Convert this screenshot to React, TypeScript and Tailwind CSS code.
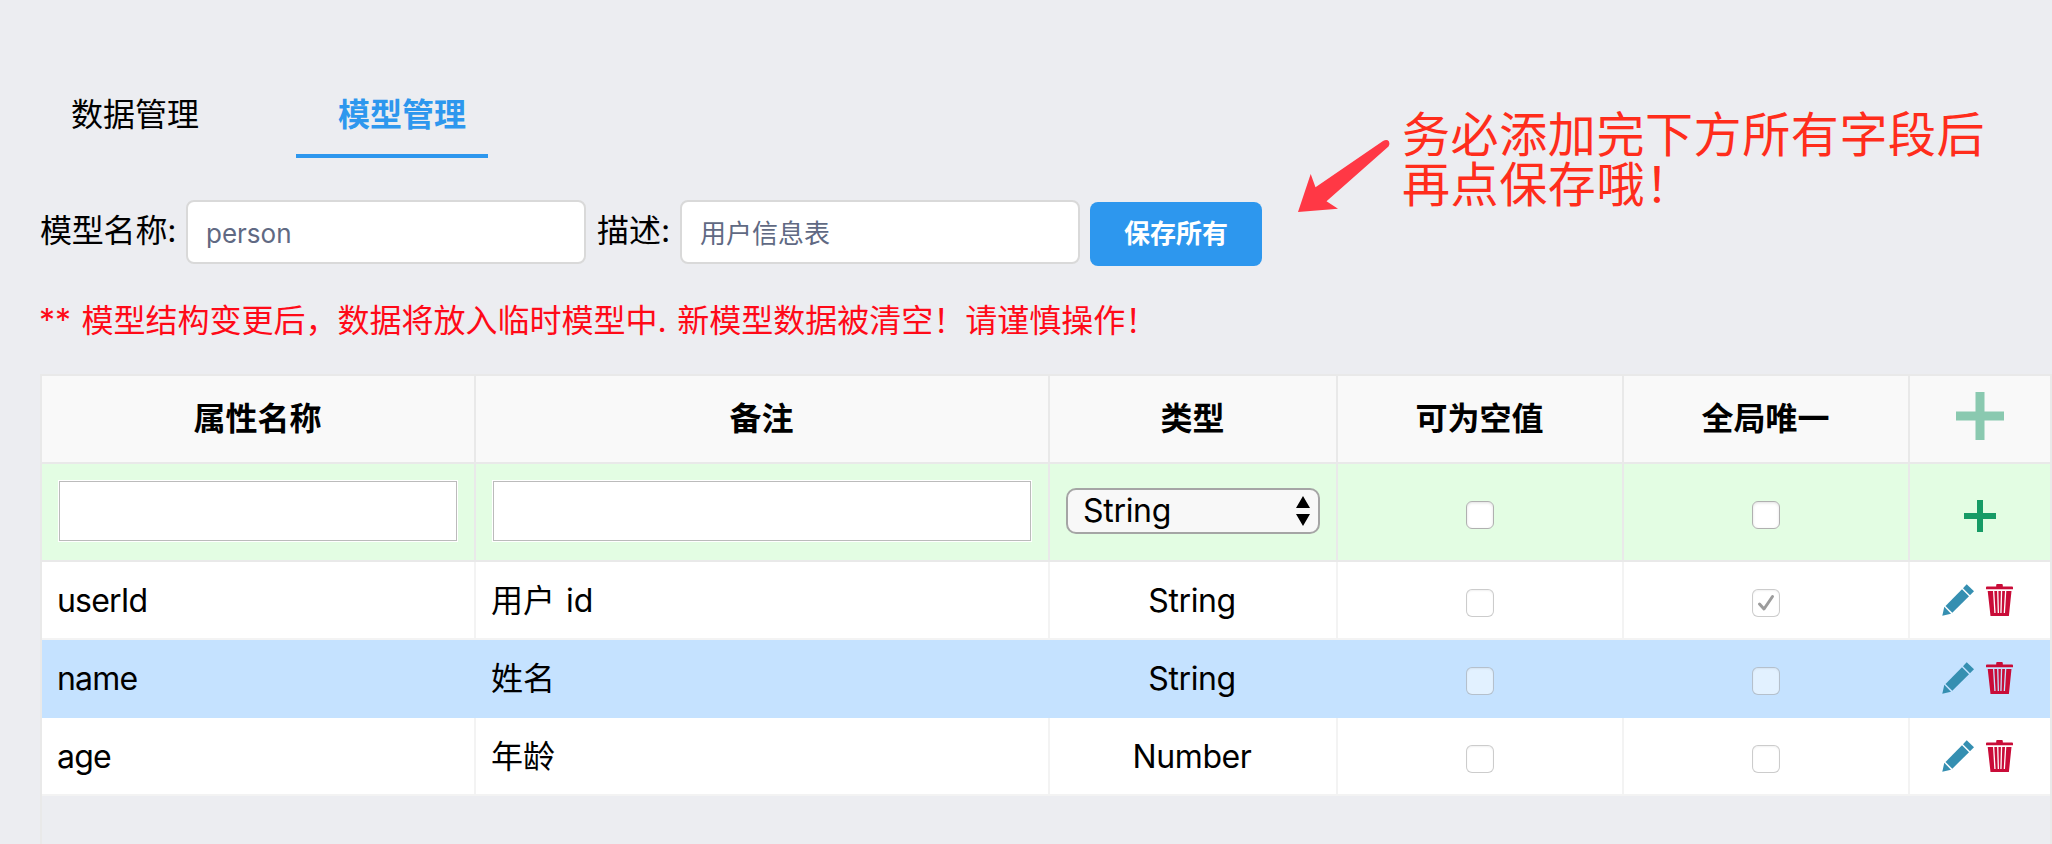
import type { ReactNode } from "react";

const GRID = "grid grid-cols-[434px_574px_288px_286px_286px_140px]";

type Field = { name: string; note: string; type: string; nullable: boolean; unique: boolean; active?: boolean };

const fields: Field[] = [
  { name: "userId", note: "用户 id", type: "String", nullable: false, unique: true },
  { name: "name", note: "姓名", type: "String", nullable: false, unique: false, active: true },
  { name: "age", note: "年龄", type: "Number", nullable: false, unique: false },
];

function Plus({ size, className }: { size: number; className: string }) {
  return (
    <svg width={size} height={size} viewBox="0 0 48 48" className={className} fill="currentColor">
      <path d="M19.5 0h9v19.5H48v9H28.5V48h-9V28.5H0v-9h19.5z" />
    </svg>
  );
}

function Pencil() {
  return (
    <svg width="32" height="32" viewBox="0 0 32 32" fill="#358fb1" className="shrink-0">
      <path d="M24.700 .3 32 7.300 28 11.300 21 4.300z" />
      <path d="M20 5.200 27 12.200 10.300 28.700 3.500 21.900z" />
      <path d="M2.300 22.700 9 29.800 .3 31.800z" />
    </svg>
  );
}

function Trash() {
  return (
    <svg width="28" height="32" viewBox="0 0 28 32" className="shrink-0" fill="#c90c38">
      <path d="M10.200 2.500V1q0-1 1-1h4.600q1 0 1 1v1.500h9.300q.9 0 .9.900V5.200H0V3.400q0-.9.900-.9z" />
      <path
        fillRule="evenodd"
        d="M1.700 7H25.500L22.900 32H4.500zM7 7 8.300 29H9.600L8.300 7zM11.100 7 11.700 29H13L12.400 7zM14.900 7 14.300 29H15.600L16.200 7zM19 7 17.700 29H19L20.300 7z"
      />
    </svg>
  );
}

function Check({ checked, disabled }: { checked?: boolean; disabled?: boolean }) {
  return (
    <span
      className={
        disabled
          ? "flex h-7 w-7 items-center justify-center rounded-[6px] border-[1.500px] border-black/20 bg-white/50 shadow-[inset_0_1px_2px_rgba(0,0,0,0.06)]"
          : "flex h-7 w-7 items-center justify-center rounded-[6px] border-[1.500px] border-[#b0b0b0] bg-white shadow-[inset_0_1px_3px_rgba(0,0,0,0.12)]"
      }
    >
      {checked && (
        <svg width="18" height="18" viewBox="0 0 18 18" fill="none" stroke="#9c9c9c" strokeWidth="3" strokeLinecap="round" strokeLinejoin="round">
          <path d="M2.500 10 7 15 15.500 2.500" />
        </svg>
      )}
    </span>
  );
}

function HeadCell({ children }: { children: ReactNode }) {
  return (
    <div className="flex items-center justify-center border-r-2 border-b-2 border-[#e9e9e9] pr-px font-bold last:border-r-0 last:pr-0">
      {children}
    </div>
  );
}

export default function App() {
  return (
    <div className="relative flex h-[844px] w-[2052px] flex-col overflow-hidden bg-[#ecedf1] pl-10 font-['Inter','Noto_Sans_CJK_SC',sans-serif] text-[32px] leading-[44px] text-black">
      <nav className="mt-[72px] flex h-[86px] shrink-0">
        <div className="flex h-full w-[192px] items-center justify-center border-b-4 border-transparent pt-1 pr-0.5">
          <span>数据管理</span>
        </div>
        <div className="ml-16 flex h-full w-[192px] items-center justify-center border-b-4 border-[#2d97ee] pt-1 pl-5 font-bold text-[#2d97ee]">
          模型管理
        </div>
      </nav>

      <div className="mt-[42px] flex h-[66px] shrink-0 items-start">
        <span className="mt-[9px] w-[146px] whitespace-nowrap tracking-[-0.2px]">模型名称:</span>
        <div className="flex h-16 w-[400px] items-center rounded-lg border-2 border-[#d9d9d9] bg-white px-[18px] pt-[3px] text-[26px] text-[#606983]">
          person
        </div>
        <span className="mt-[9px] ml-[11px] w-[83px] whitespace-nowrap">描述:</span>
        <div className="flex h-16 w-[400px] items-center rounded-lg border-2 border-[#d9d9d9] bg-white px-[18px] pt-[3px] text-[26px] text-[#606983]">
          用户信息表
        </div>
        <button className="mt-0.5 ml-2.5 flex h-16 w-[172px] items-center justify-center rounded-lg bg-[#2d97ee] text-[26px] font-bold text-white">
          保存所有
        </button>
      </div>

      <p className="mt-[33px] -ml-px h-[44px] shrink-0 whitespace-nowrap text-[#ff0a18] [word-spacing:1.500px]">
        ** 模型结构变更后，数据将放入临时模型中. 新模型数据被清空！请谨慎操作！
      </p>

      <div className="mt-[31px] h-[480px] w-[2012px] shrink-0 border-2 border-[#e9e9e9]">
        <div className={`${GRID} h-[88px] bg-[#f9f9f9]`}>
          <HeadCell>属性名称</HeadCell>
          <HeadCell>备注</HeadCell>
          <HeadCell>类型</HeadCell>
          <HeadCell>可为空值</HeadCell>
          <HeadCell>全局唯一</HeadCell>
          <HeadCell>
            <Plus size={48} className="mb-1.5 text-[#8ac9b0]" />
          </HeadCell>
        </div>

        <div className={`${GRID} h-[98px] bg-[#e3fde3]`}>
          <div className="border-r-2 border-b-2 border-[#e9e9e9] px-4 pt-4">
            <div className="h-[62px] border border-white bg-[#bbb] p-px">
              <div className="h-full bg-white" />
            </div>
          </div>
          <div className="border-r-2 border-b-2 border-[#e9e9e9] px-4 pt-4">
            <div className="h-[62px] border border-white bg-[#bbb] p-px">
              <div className="h-full bg-white" />
            </div>
          </div>
          <div className="border-r-2 border-b-2 border-[#e9e9e9] px-4 pt-6">
            <div className="flex h-[46px] items-center justify-between rounded-[10px] border-2 border-[#a5a5a5] bg-[#f8f8f8] pr-2 pl-[15px]">
              <span className="tracking-[-0.3px]">String</span>
              <svg width="14" height="30" viewBox="0 0 14 30">
                <path d="M7 0 14 12H0zM0 18H14L7 30z" />
              </svg>
            </div>
          </div>
          <div className="flex items-center justify-center border-r-2 border-b-2 border-[#e9e9e9] pt-1.5">
            <Check />
          </div>
          <div className="flex items-center justify-center border-r-2 border-b-2 border-[#e9e9e9] pt-1.5">
            <Check />
          </div>
          <div className="flex items-center justify-center border-b-2 border-[#e9e9e9] pt-2">
            <Plus size={32} className="text-[#179b66]" />
          </div>
        </div>

        {fields.map((f) => {
          const line = f.active ? "border-[#c5e2ff]" : "border-[#f3f3f3]";
          return (
            <div key={f.name} className={`${GRID} h-[78px] ${f.active ? "bg-[#c5e2ff]" : "bg-white"}`}>
              <div className={`flex items-center border-r-2 border-b-2 pt-0.5 pl-[15px] tracking-[-0.8px] ${line}`}>{f.name}</div>
              <div className={`flex items-center border-r-2 border-b-2 pt-0.5 pl-[15px] [word-spacing:2px] ${line}`}>{f.note}</div>
              <div className={`flex items-center justify-center border-r-2 border-b-2 pt-0.5 pr-0.5 tracking-[-0.4px] ${line}`}>{f.type}</div>
              <div className={`flex items-center justify-center border-r-2 border-b-2 pt-1.5 ${line}`}>
                <Check disabled checked={f.nullable} />
              </div>
              <div className={`flex items-center justify-center border-r-2 border-b-2 pt-1.5 ${line}`}>
                <Check disabled checked={f.unique} />
              </div>
              <div className={`flex items-center gap-3 border-b-2 pl-8 ${line}`}>
                <Pencil />
                <Trash />
              </div>
            </div>
          );
        })}
      </div>

      <svg className="absolute top-[136px] left-[1296px]" width="96" height="80" viewBox="0 0 96 80" fill="#ff3845">
        <path d="M2 76 14.700 38 19.500 51.300 87 5Q91 2.800 93 5.500 94.200 8 92.500 10.500L30.500 65.300 42 72.700z" />
      </svg>
      <div className="absolute top-[110px] left-[1402px] text-[48px] leading-[50px] tracking-[0.6px] whitespace-nowrap text-[#ff2d1c]">
        务必添加完下方所有字段后
        <br />
        再点保存哦！
      </div>
    </div>
  );
}
